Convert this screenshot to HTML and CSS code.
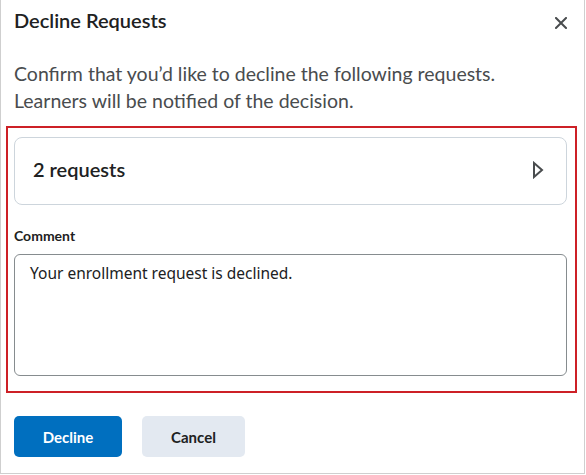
FILE: index.html
```html
<!DOCTYPE html>
<html lang="en">
<head>
<meta charset="utf-8">
<title>Decline Requests</title>
<link rel="stylesheet" href="styles.css">
</head>
<body>
<div class="dialog">
  <div class="header">
    <h1 class="title">Decline Requests</h1>
    <button class="close" aria-label="Close">
      <svg width="12" height="12" viewBox="0 0 12 12"><path d="M1 1 L11 11 M11 1 L1 11" stroke="#494c4e" stroke-width="2" fill="none" stroke-linecap="square"/></svg>
    </button>
  </div>
  <p class="intro">Confirm that you’d like to decline the following requests.<br>Learners will be notified of the decision.</p>
  <div class="highlight">
    <div class="card">
      <span class="card-text">2 requests</span>
      <svg class="chev" width="12" height="18" viewBox="0 0 12 18"><path d="M2 2 L10 9 L2 16 Z" stroke="#494c4e" stroke-width="2" fill="none" stroke-linejoin="miter"/></svg>
    </div>
    <label class="label">Comment</label>
    <div class="textarea">Your enrollment request is declined.</div>
  </div>
  <div class="actions">
    <button class="btn primary">Decline</button>
    <button class="btn secondary">Cancel</button>
  </div>
</div>
</body>
</html>
```

FILE: styles.css
```css
html, body {
  margin: 0;
  padding: 0;
  background: #ffffff;
}
.dialog {
  box-sizing: border-box;
  width: 585px;
  height: 474px;
  border: 1px solid #cfcfcf;
  border-top: none;
  padding: 0 17px 0 13px;
  font-family: Lato, "Liberation Sans", sans-serif;
  color: #202122;
}
.header {
  display: flex;
  align-items: center;
  justify-content: space-between;
  padding-top: 7px;
}
.title {
  margin: 0;
  font-size: 20px;
  line-height: 27px;
  font-weight: 600;
  color: #202122;
}
.close {
  border: none;
  background: none;
  padding: 0;
  margin: 4px -1px 0 0;
  width: 14px;
  height: 14px;
  display: flex;
  align-items: center;
  justify-content: center;
}
.intro {
  margin: 26px 0 0;
  font-size: 19.5px;
  line-height: 27px;
  color: #494c4e;
}
.highlight {
  margin: 12px -10px 0 -8px;
  border: 2px solid #cd2026;
  padding: 9px 8px 15px 6px;
}
.card {
  box-sizing: border-box;
  height: 68px;
  border: 1px solid #cdd5dc;
  border-radius: 8px;
  display: flex;
  align-items: center;
  justify-content: space-between;
  padding: 0 22px 4px 18px;
}
.card-text {
  font-size: 20px;
  font-weight: 600;
  color: #202122;
}
.chev {
  margin-top: 2px;
}
.label {
  display: block;
  margin-top: 22px;
  font-size: 14px;
  line-height: 17px;
  font-weight: 700;
  color: #202122;
}
.textarea {
  box-sizing: border-box;
  margin-top: 10px;
  height: 122px;
  border: 1px solid #868c8f;
  border-radius: 6px;
  padding: 8px 15px;
  font-family: "Noto Sans", "Open Sans", sans-serif;
  font-size: 15.5px;
  line-height: 20px;
  color: #202122;
}
.actions {
  display: flex;
  gap: 20px;
  margin-top: 23px;
}
.btn {
  height: 41px;
  border: none;
  border-radius: 5px;
  padding: 0;
  font-family: Lato, "Liberation Sans", sans-serif;
  font-size: 15px;
  font-weight: 700;
}
.primary {
  background: #006fbf;
  color: #ffffff;
  width: 108px;
}
.secondary {
  background: #e3e9f1;
  color: #202122;
  width: 103px;
}
```
